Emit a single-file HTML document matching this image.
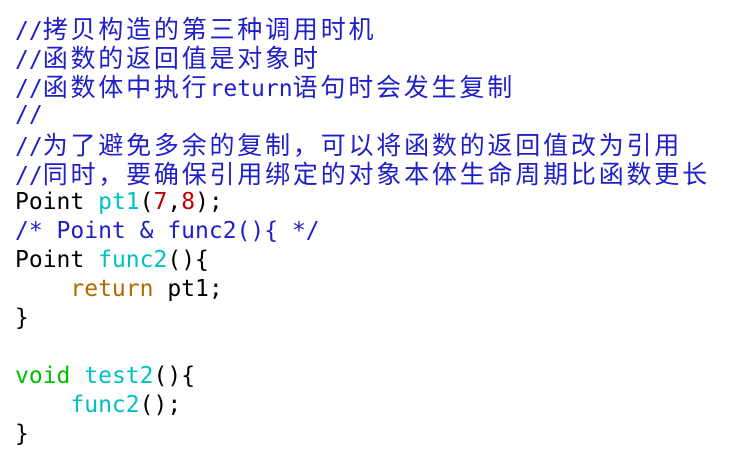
<!DOCTYPE html>
<html><head><meta charset="utf-8"><style>
html,body{margin:0;padding:0;background:#fff;width:747px;height:458px;overflow:hidden}
.p{margin:0;padding:14px 0 0 15px;font-family:"DejaVu Sans Mono","Liberation Mono",monospace;font-size:23px;color:#000;white-space:pre}
.p div{height:29px;line-height:29px;overflow:visible}
.c{color:#1f1fc8}
.k{font-family:"Noto Sans CJK SC",sans-serif;font-size:25px;letter-spacing:2.8px;line-height:29px}
.t{color:#00c0c0}.n{color:#c00000}.r{color:#b06a00}.g{color:#00c000}
</style></head><body><div class="p"><div><span class="c">//<span class="k">拷贝构造的第三种调用时机</span></span></div><div><span class="c">//<span class="k">函数的返回值是对象时</span></span></div><div><span class="c">//<span class="k">函数体中执行</span>return<span class="k">语句时会发生复制</span></span></div><div><span class="c">//</span></div><div><span class="c">//<span class="k">为了避免多余的复制，可以将函数的返回值改为引用</span></span></div><div><span class="c">//<span class="k">同时，要确保引用绑定的对象本体生命周期比函数更长</span></span></div><div>Point <span class="t">pt1</span>(<span class="n">7</span>,<span class="n">8</span>);</div><div><span class="c">/* Point &amp; func2(){ */</span></div><div>Point <span class="t">func2</span>(){</div><div>    <span class="r">return</span> pt1;</div><div>}</div><div> </div><div><span class="g">void</span> <span class="t">test2</span>(){</div><div>    <span class="t">func2</span>();</div><div>}</div></div></body></html>
